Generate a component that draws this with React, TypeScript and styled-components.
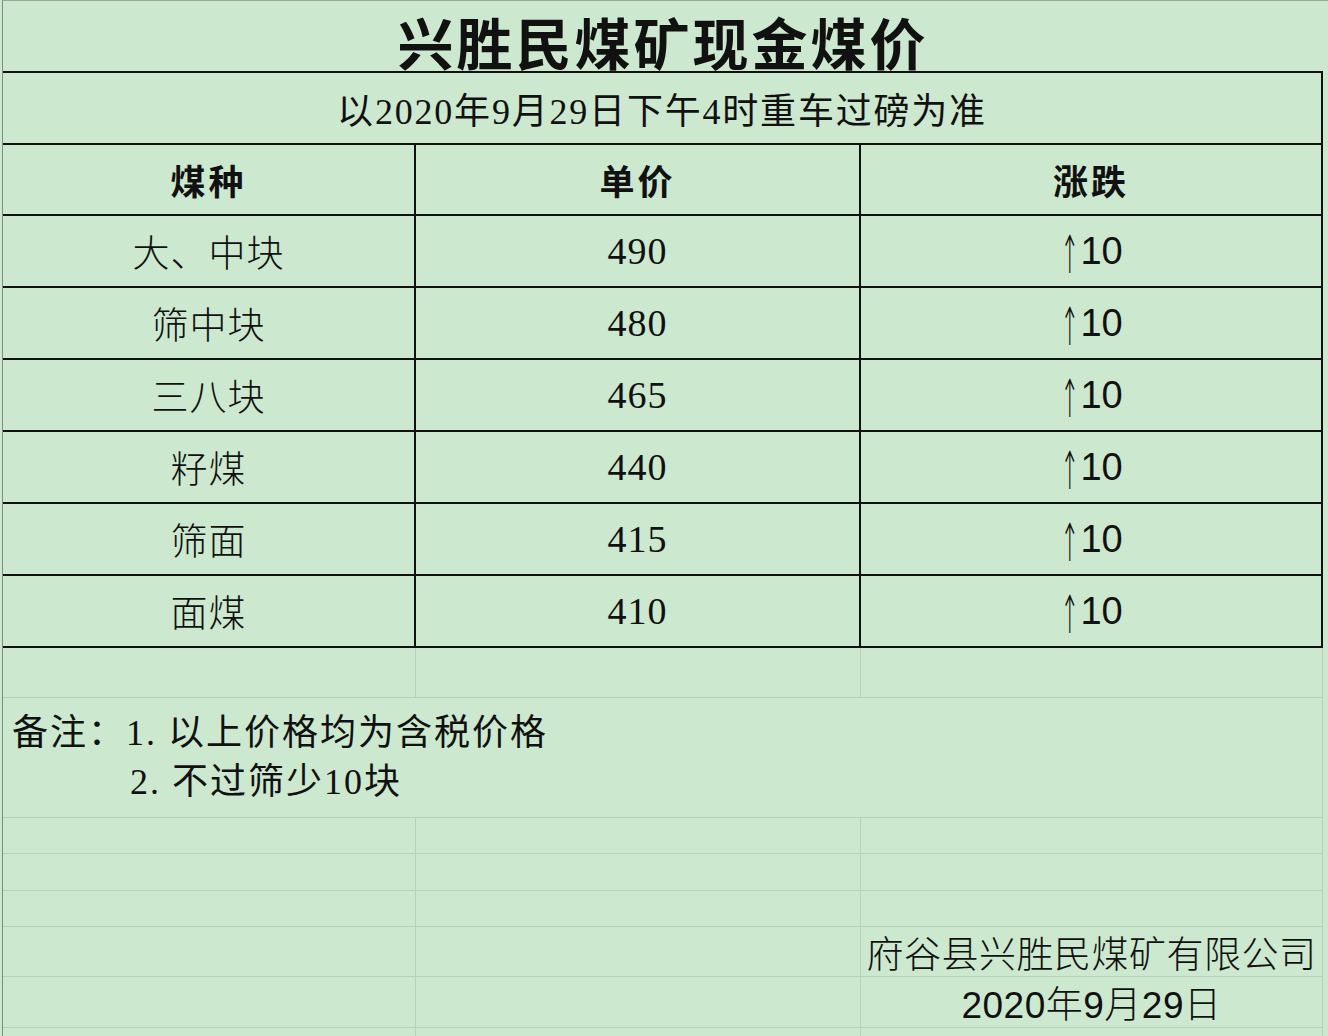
import React from 'react';
import styled, { createGlobalStyle, css } from 'styled-components';

const GlobalStyle = createGlobalStyle`
	html, body {
		margin: 0;
		padding: 0;
		background: #cce8cf;
	}
	body {
		font-family: 'Liberation Serif', 'Noto Sans CJK SC', serif;
		color: #111;
	}
`;

type Rule = 'bold' | 'thin' | 'none';

const ruleCss = (r: Rule | undefined) =>
	r === 'bold' ? '2px solid #111' : r === 'thin' ? '1px solid #b6d1ba' : '0';

const Page = styled.div`
	width: 1328px;
	height: 1036px;
	overflow: hidden;
	padding-left: 2px;
	box-sizing: border-box;
	background: #cce8cf;
`;

const Sheet = styled.div`
	display: grid;
	grid-template-columns: 413px 445px 462px;
	border-left: 1px solid #7f8c81;
	border-top: 1px solid #9aa89c;
`;

const Cell = styled.div<{
	$span?: number;
	$h: number;
	$bottom?: Rule;
	$right?: Rule;
	$align?: 'center' | 'left' | 'top';
}>`
	grid-column: span ${({ $span }) => $span || 1};
	height: ${({ $h }) => $h}px;
	box-sizing: border-box;
	border-bottom: ${({ $bottom }) => ruleCss($bottom)};
	border-right: ${({ $right }) => ruleCss($right)};
	display: flex;
	justify-content: center;
	align-items: ${({ $align }) => ($align === 'top' ? 'flex-start' : 'center')};
	white-space: nowrap;
	${({ $align }) =>
		$align === 'left' &&
		css`
			flex-direction: column;
			justify-content: center;
			align-items: flex-start;
		`}
`;

const Title = styled.h1`
	margin: 10px 0 0 0;
	font-family: 'Noto Sans CJK SC', sans-serif;
	font-size: 56px;
	font-weight: 700;
	line-height: 60px;
	letter-spacing: 3px;
`;

const Subtitle = styled.span`
	font-family: 'Liberation Serif', 'Noto Sans CJK SC', serif;
	font-size: 36px;
	font-weight: 400;
	letter-spacing: 1.8px;
`;

const HeadText = styled.span`
	font-family: 'Noto Sans CJK SC', sans-serif;
	font-size: 35px;
	font-weight: 700;
	letter-spacing: 3px;
`;

const BodyText = styled.span<{ $kind?: 'name' | 'num' | 'change' }>`
	font-size: 37px;
	font-weight: 400;
	${({ $kind }) =>
		$kind === 'num'
			? css`
					font-family: 'Liberation Serif', serif;
					font-size: 38px;
					letter-spacing: 1px;
			  `
			: $kind === 'change'
			? css`
					font-family: 'Liberation Sans', 'DejaVu Sans', sans-serif;
					font-size: 38px;
					display: flex;
					align-items: center;
			  `
			: css`
					font-family: 'Noto Sans CJK SC', sans-serif;
					font-weight: 300;
					letter-spacing: 1px;
			  `}
`;

const Arrow = styled.span`
	display: inline-block;
	font-family: 'DejaVu Sans', sans-serif;
	font-size: 30px;
	font-weight: 300;
	line-height: 1;
	transform: scale(0.75, 1.75);
	transform-origin: center;
	position: relative;
	top: 4px;
	margin: 0 -2px 0 -2px;
`;

const NoteLine = styled.div<{ $indent: number }>`
	padding-left: ${({ $indent }) => $indent}px;
	font-family: 'Liberation Serif', 'Noto Sans CJK SC', serif;
	font-size: 36px;
	line-height: 49px;
	letter-spacing: 2px;
`;

const Footer = styled.span`
	font-family: 'Noto Sans CJK SC', sans-serif;
	font-size: 37px;
	font-weight: 300;
	letter-spacing: 0.5px;
`;

const FooterDate = styled(Footer)`
	font-family: 'Liberation Sans Narrow', 'Liberation Sans', 'Noto Sans CJK SC', sans-serif;
	font-size: 37px;
`;

const rows = [
	{ name: '大、中块', price: 490 },
	{ name: '筛中块', price: 480 },
	{ name: '三八块', price: 465 },
	{ name: '籽煤', price: 440 },
	{ name: '筛面', price: 415 },
	{ name: '面煤', price: 410 },
];

const BlankRow = ({ h, text, dateLike }: { h: number; text?: string; dateLike?: boolean }) => (
	<>
		<Cell $h={h} $bottom="thin" $right="thin" />
		<Cell $h={h} $bottom="thin" $right="thin" />
		<Cell $h={h} $bottom="thin" $right="thin">
			{text && (dateLike ? <FooterDate>{text}</FooterDate> : <Footer>{text}</Footer>)}
		</Cell>
	</>
);

export default function App() {
	return (
		<Page>
			<GlobalStyle />
			<Sheet>
				<Cell $span={3} $h={72} $bottom="bold" $align="top">
					<Title>兴胜民煤矿现金煤价</Title>
				</Cell>
				<Cell $span={3} $h={72} $bottom="bold" $right="bold">
					<Subtitle>以2020年9月29日下午4时重车过磅为准</Subtitle>
				</Cell>

				<Cell $h={71} $bottom="bold" $right="bold">
					<HeadText>煤种</HeadText>
				</Cell>
				<Cell $h={71} $bottom="bold" $right="bold">
					<HeadText>单价</HeadText>
				</Cell>
				<Cell $h={71} $bottom="bold" $right="bold">
					<HeadText>涨跌</HeadText>
				</Cell>

				{rows.map((r) => (
					<React.Fragment key={r.name}>
						<Cell $h={72} $bottom="bold" $right="bold">
							<BodyText $kind="name">{r.name}</BodyText>
						</Cell>
						<Cell $h={72} $bottom="bold" $right="bold">
							<BodyText $kind="num">{r.price}</BodyText>
						</Cell>
						<Cell $h={72} $bottom="bold" $right="bold">
							<BodyText $kind="change">
								<Arrow>↑</Arrow>10
							</BodyText>
						</Cell>
					</React.Fragment>
				))}

				<BlankRow h={50} />
				<Cell $span={3} $h={120} $bottom="thin" $right="thin" $align="left">
					<NoteLine $indent={9}>备注：1. 以上价格均为含税价格</NoteLine>
					<NoteLine $indent={127}>2. 不过筛少10块</NoteLine>
				</Cell>
				<BlankRow h={36} />
				<BlankRow h={37} />
				<BlankRow h={36} />
				<BlankRow h={50} text="府谷县兴胜民煤矿有限公司" />
				<BlankRow h={51} text="2020年9月29日" dateLike />
				<BlankRow h={40} />
			</Sheet>
		</Page>
	);
}
